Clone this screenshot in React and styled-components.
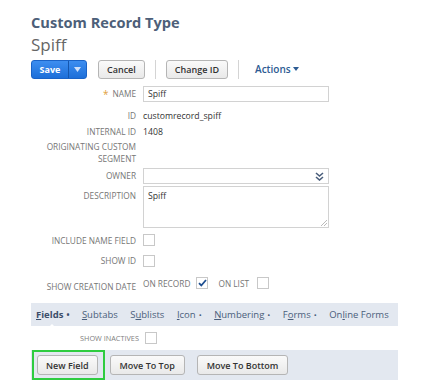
import React from "react";
import styled, { createGlobalStyle } from "styled-components";

const GlobalStyle = createGlobalStyle`
  body {
    margin: 0;
    background: #fff;
    font-family: "Open Sans", "Liberation Sans", sans-serif;
  }
`;

const Page = styled.div`
  width: 433px;
  height: 389px;
  padding: 12px 0 0 31px;
  box-sizing: border-box;
  overflow: hidden;
`;

const Title = styled.h1`
  margin: 0;
  font-size: 14.6px;
  line-height: 20px;
  font-weight: 700;
  color: #4d5f79;
`;

const RecordName = styled.div`
  margin-top: 2px;
  font-size: 17px;
  line-height: 22px;
  color: #666;
`;

const Toolbar = styled.div`
  display: flex;
  align-items: center;
  margin-top: 3px;
  height: 20px;
`;

const SaveGroup = styled.div`
  display: flex;
  height: 19px;
  border-radius: 3px;
  background: linear-gradient(#3d8ef0, #1d6fd9);
  border: 1px solid #1a63c7;
  box-sizing: border-box;
  color: #fff;
  font-size: 9px;
  font-weight: 700;
`;

const SavePart = styled.span`
  display: flex;
  align-items: center;
  justify-content: center;
  width: ${(p) => p.$w}px;
  border-left: ${(p) => (p.$split ? "1px solid #1556ad" : "none")};
`;

const Button = styled.button`
  height: ${(p) => p.$h || 19}px;
  padding: 0 ${(p) => p.$px || 8}px;
  margin-left: ${(p) => p.$ml || 0}px;
  border: 1px solid #b5b5b5;
  border-radius: 3px;
  background: linear-gradient(#fafafa, #e9e9e9);
  font-family: inherit;
  font-size: 9px;
  font-weight: 600;
  color: #333;
  white-space: nowrap;
`;

const Divider = styled.span`
  width: 1px;
  height: 19px;
  margin: 0 10px;
  background: #d4d4d4;
`;

const Actions = styled.span`
  margin-left: 6px;
  font-size: 10px;
  font-weight: 600;
  color: #2d5b93;
  display: flex;
  align-items: center;
  gap: 2px;
`;

const Form = styled.div`
  display: grid;
  grid-template-columns: 105px 186px;
  column-gap: 7px;
  margin-top: 7px;
  align-items: center;
`;

const Label = styled.div`
  text-align: right;
  font-size: 8.3px;
  line-height: 12px;
  color: #767676;
  text-transform: uppercase;
  height: ${(p) => p.$h || 16}px;
  display: flex;
  align-items: ${(p) => p.$align || "center"};
  justify-content: flex-end;
  padding-top: ${(p) => p.$pt || 0}px;
  box-sizing: border-box;
  white-space: nowrap;
`;

const Required = styled.span`
  color: #e0a040;
  margin-right: 4px;
  font-size: 10px;
`;

const Value = styled.div`
  font-size: 8.7px;
  color: #333;
  height: ${(p) => p.$h || 16}px;
  padding-top: ${(p) => p.$pt || 0}px;
  box-sizing: border-box;
  display: flex;
  align-items: center;
`;

const Input = styled.div`
  height: 16px;
  border: 1px solid #d2d2d2;
  box-sizing: border-box;
  font-size: 8.7px;
  color: #333;
  padding: 0 4px;
  display: flex;
  align-items: center;
  justify-content: space-between;
`;

const TextArea = styled.div`
  position: relative;
  height: 42px;
  margin-top: 2px;
  border: 1px solid #d2d2d2;
  box-sizing: border-box;
  font-size: 8.7px;
  color: #333;
  padding: 3px 4px;
`;

const Grip = styled.svg`
  position: absolute;
  right: 1px;
  bottom: 1px;
`;

const Box = styled.span`
  display: inline-flex;
  align-items: center;
  justify-content: center;
  width: 12px;
  height: 12px;
  border: 1px solid #c8c8c8;
  box-sizing: border-box;
  background: #fff;
  margin-left: ${(p) => p.$ml || 0}px;
`;

const CheckRow = styled.div`
  display: flex;
  align-items: center;
  height: ${(p) => p.$h || 16}px;
  font-size: 8.3px;
  color: #767676;
  text-transform: uppercase;
`;

const Tabs = styled.div`
  width: 367px;
  margin-top: 7px;
`;

const TabBar = styled.div`
  display: flex;
  align-items: center;
  height: 23px;
  background: #e3e8f0;
  padding-left: 5px;
  gap: 12.5px;
  font-size: 9.5px;
  color: #4a5e7b;
`;

const Tab = styled.span`
  position: relative;
  font-weight: ${(p) => (p.$active ? 700 : 400)};
  color: ${(p) => (p.$active ? "#3c4e6a" : "#4a5e7b")};
  white-space: nowrap;
  u {
    text-decoration: underline;
  }
  &::after {
    content: "";
    display: ${(p) => (p.$active ? "block" : "none")};
    position: absolute;
    left: 12px;
    bottom: -7px;
    border-left: 4px solid transparent;
    border-right: 4px solid transparent;
    border-bottom: 4px solid #fff;
  }
`;

const Dot = styled.span`
  font-size: 8px;
  margin-left: 3px;
`;

const Inactives = styled.div`
  display: flex;
  align-items: center;
  height: 24px;
  padding-left: 49px;
  gap: 6px;
  font-size: 7.3px;
  color: #808080;
`;

const ButtonBar = styled.div`
  display: flex;
  align-items: center;
  height: 30px;
  background: #e3e8f0;
  padding-left: 1px;
`;

const Highlight = styled.div`
  border: 2px solid #2ecc40;
  padding: 3px 5px 3px 3px;
  display: flex;
`;

export default function App() {
  return (
    <>
      <GlobalStyle />
      <Page>
        <Title>Custom Record Type</Title>
        <RecordName>Spiff</RecordName>
        <Toolbar>
          <SaveGroup>
            <SavePart $w={36}>Save</SavePart>
            <SavePart $w={17} $split>
              <svg width="7" height="5" viewBox="0 0 7 5">
                <path d="M0 0h7L3.5 5z" fill="#cfe0fa" />
              </svg>
            </SavePart>
          </SaveGroup>
          <Button $ml={11}>Cancel</Button>
          <Divider />
          <Button>Change ID</Button>
          <Divider />
          <Actions>
            Actions
            <svg width="6" height="4" viewBox="0 0 6 4">
              <path d="M0 0h6L3 4z" fill="#2d5b93" />
            </svg>
          </Actions>
        </Toolbar>

        <Form>
          <Label>
            <Required>*</Required>Name
          </Label>
          <Input>Spiff</Input>

          <Label $h={24} $pt={3}>ID</Label>
          <Value $h={24} $pt={3}>customrecord_spiff</Value>

          <Label $h={12}>Internal ID</Label>
          <Value $h={12}>1408</Value>

          <Label $h={30}>
            Originating custom
            <br />
            segment
          </Label>
          <div />

          <Label>Owner</Label>
          <Input>
            <span />
            <svg width="9" height="9" viewBox="0 0 9 9">
              <path d="M1 1l3.5 3 3.5-3M1 5l3.5 3 3.5-3" fill="none" stroke="#4a5e7b" strokeWidth="1.6" />
            </svg>
          </Input>

          <Label $h={44} $align="flex-start" $pt={6}>
            Description
          </Label>
          <TextArea>
            Spiff
            <Grip width="6" height="6" viewBox="0 0 6 6">
              <path d="M6 0L0 6M6 3L3 6" stroke="#aaa" strokeWidth="0.8" />
            </Grip>
          </TextArea>

          <Label $h={24} $pt={2}>Include name field</Label>
          <CheckRow $h={24}>
            <Box />
          </CheckRow>

          <Label $h={18}>Show ID</Label>
          <CheckRow $h={18}>
            <Box />
          </CheckRow>

          <Label $h={26} $pt={8}>Show creation date</Label>
          <CheckRow $h={26}>
            On record
            <Box $ml={6}>
              <svg width="9" height="8" viewBox="0 0 9 8">
                <path d="M1 4.2l2.3 2.3L8 1" fill="none" stroke="#1e4f91" strokeWidth="1.8" />
              </svg>
            </Box>
            <span style={{ marginLeft: 10 }}>On list</span>
            <Box $ml={8} />
          </CheckRow>
        </Form>

        <Tabs>
          <TabBar>
            <Tab $active>
              <u>F</u>ields<Dot>•</Dot>
            </Tab>
            <Tab>
              <u>S</u>ubtabs
            </Tab>
            <Tab>
              S<u>u</u>blists
            </Tab>
            <Tab>
              <u>I</u>con<Dot>•</Dot>
            </Tab>
            <Tab>
              <u>N</u>umbering<Dot>•</Dot>
            </Tab>
            <Tab>
              F<u>o</u>rms<Dot>•</Dot>
            </Tab>
            <Tab>
              On<u>l</u>ine Forms
            </Tab>
          </TabBar>
          <Inactives>
            SHOW INACTIVES
            <Box />
          </Inactives>
          <ButtonBar>
            <Highlight>
              <Button $h={20} $px={8}>New Field</Button>
            </Highlight>
            <Button $h={20} $px={9} $ml={5}>Move To Top</Button>
            <Button $h={20} $px={9} $ml={12}>Move To Bottom</Button>
          </ButtonBar>
        </Tabs>
      </Page>
    </>
  );
}
